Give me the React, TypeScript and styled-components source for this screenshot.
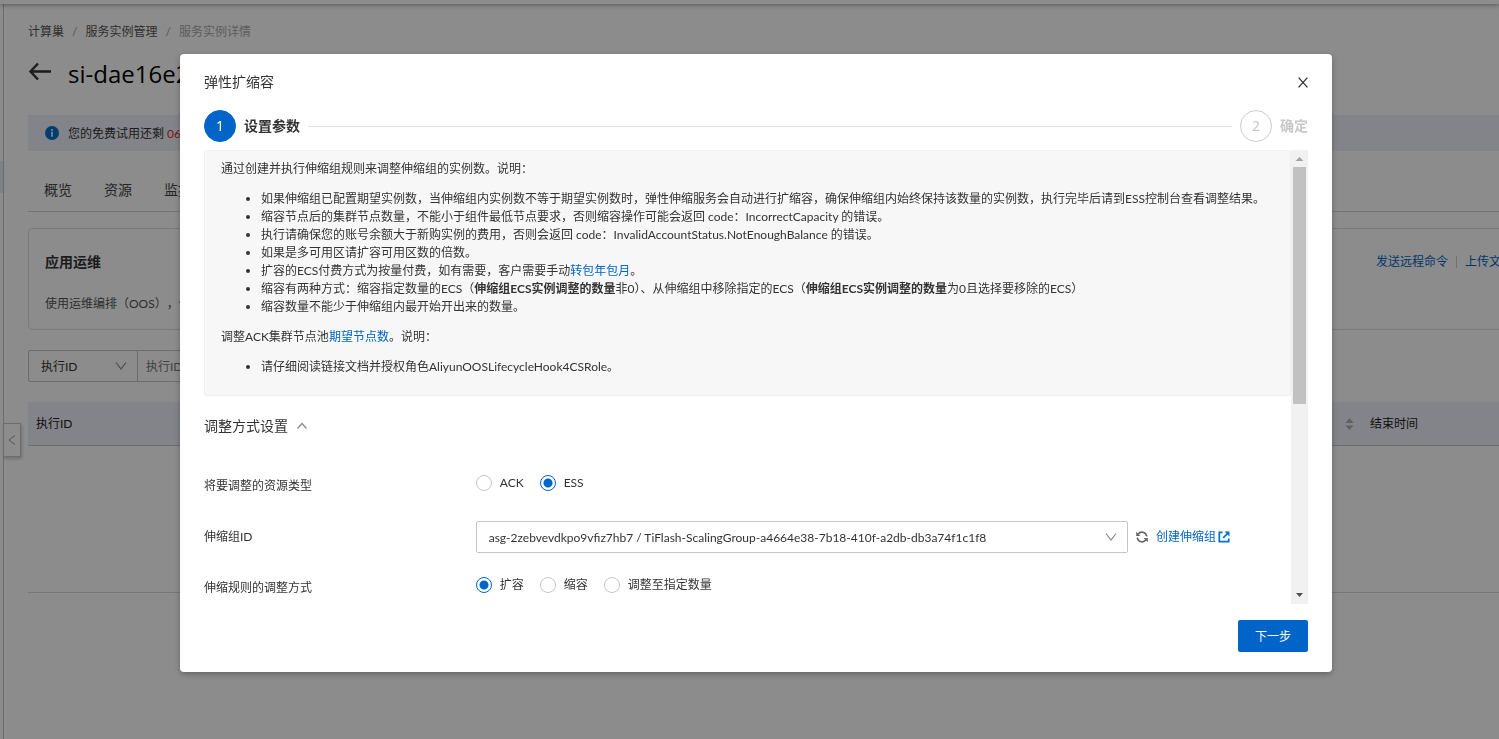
import React, { useState } from "react";
import styled, { createGlobalStyle } from "styled-components";

const GlobalStyle = createGlobalStyle`
  *, *::before, *::after { box-sizing: border-box; }
  body {
    margin: 0;
    background: #fff;
    color: #333;
    font: 12px/18px Lato, "Noto Sans CJK SC", sans-serif;
  }
  button, input, select { font: inherit; color: inherit; }
  a { color: #0064c8; text-decoration: none; }
`;

/* ---------- page behind the dialog ---------- */

const Page = styled.div`
  display: flex;
  flex-direction: column;
  height: 100vh;
  overflow: hidden;
`;

const TopBar = styled.header`
  flex: none;
  height: 4px;
  background: #fff;
  box-shadow: 0 1px 4px rgba(0, 0, 0, 0.4);
  z-index: 1;
`;

const Body = styled.div`
  display: flex;
  flex: 1;
  min-height: 0;
`;

const Sidebar = styled.aside`
  position: relative;
  flex: none;
  width: 4px;
  padding-top: 157px;
  border-right: 1px solid #c0c6cc;
`;

const SidebarActive = styled.div`
  height: 32px;
  background: #e6ebf5;
`;

const CollapseButton = styled.button`
  position: absolute;
  top: 419px;
  left: 3px;
  display: grid;
  place-items: center;
  width: 18px;
  height: 34px;
  padding: 0;
  border: 1px solid #c0c6cc;
  background: #fff;
  color: #999;
  box-shadow: 1px 2px 3px rgba(0, 0, 0, 0.2);
`;

const Main = styled.main`
  flex: none;
  width: calc(100% + 51px);
  padding: 19px 24px 0;
`;

const Breadcrumb = styled.nav`
  display: flex;
  height: 18px;
  a { color: #555; }
  a::after { content: "/"; margin: 0 8px; color: #999; }
  span { color: #aaa; }
`;

const TitleRow = styled.div`
  display: flex;
  align-items: center;
  gap: 16px;
  height: 36px;
  margin-top: 15px;
`;

const BackButton = styled.button`
  display: flex;
  padding: 0;
  border: 0;
  background: none;
  height: 24px;
`;

const PageTitle = styled.h1`
  margin: 0;
  font: 500 24px/36px "Open Sans", sans-serif;
  color: #000;
`;

const TrialNotice = styled.div`
  display: flex;
  align-items: center;
  gap: 9px;
  height: 36px;
  margin-top: 23px;
  padding: 1px 16px 0;
  background: #eff1f9;
  em { font-style: normal; color: #d93026; }
`;

const Tabs = styled.nav`
  display: flex;
  gap: 32px;
  height: 61px;
  padding: 29px 16px 0;
  border-bottom: 1px solid #d4d4d4;
  font-size: 14px;
  line-height: 20px;
  a { color: #444; }
`;

const OpsCard = styled.section`
  height: 102px;
  margin-top: 16px;
  padding: 23px 16px;
  border: 1px solid #dedede;
  border-radius: 4px;
  p { margin: 23px 0 0; color: #555; text-spacing-trim: space-all; }
`;

const CardHead = styled.div`
  display: flex;
  justify-content: space-between;
  align-items: center;
  h2 { margin: 0; font-size: 14px; line-height: 20px; font-weight: 700; }
`;

const CardLinks = styled.div`
  display: flex;
  a { line-height: 12px; }
  a + a { margin-left: 8px; padding-left: 8px; border-left: 1px solid #ccc; }
`;

const Filter = styled.div`
  display: flex;
  height: 32px;
  margin-top: 20px;
`;

const FilterKey = styled.div`
  width: 110px;
`;

const FilterInput = styled.input`
  width: 240px;
  margin-left: -1px;
  padding: 1px 8px 0;
  border: 1px solid #c0c6cc;
  &::placeholder { color: #777; opacity: 1; }
`;

const Table = styled.table`
  width: 100%;
  margin-top: 20px;
  border-collapse: collapse;
  table-layout: fixed;
  th {
    height: 43px;
    padding: 1px 8px 0;
    background: #eff1f9;
    border-bottom: 1px solid #c0c6d4;
    text-align: left;
    font-weight: 400;
    color: #222;
  }
  td { height: 147px; border-bottom: 1px solid #d8d8d8; }
`;

const SortHead = styled.th`
  button { display: block; margin-left: auto; padding: 0; border: 0; background: none; height: 14px; }
`;

const EndHead = styled.th`
  width: 168px;
`;

/* ---------- shared select ---------- */

const SelectBox = styled.div`
  position: relative;
  height: 32px;
  svg { position: absolute; top: 10px; right: 11px; pointer-events: none; }
`;

const Select = styled.select`
  width: 100%;
  height: 32px;
  padding: 1px 32px 0 12px;
  border: 1px solid #c0c6cc;
  border-radius: 2px;
  background: transparent;
  appearance: none;
`;

/* ---------- dialog ---------- */

const Mask = styled.div`
  position: fixed;
  inset: 0;
  z-index: 10;
  padding: 54px 167px 67px 180px;
  background: rgba(0, 0, 0, 0.45);
`;

const Dialog = styled.section`
  display: flex;
  flex-direction: column;
  height: 100%;
  padding: 16px 24px 20px;
  border-radius: 4px;
  background: #fff;
  box-shadow: 0 2px 6px rgba(0, 0, 0, 0.3);
`;

const DialogHead = styled.header`
  display: flex;
  justify-content: space-between;
  align-items: center;
  height: 24px;
  h2 { margin: 0; font-size: 14px; line-height: 24px; font-weight: 400; }
`;

const CloseButton = styled.button`
  display: flex;
  padding: 0;
  border: 0;
  background: none;
`;

const Steps = styled.ol`
  display: flex;
  align-items: center;
  gap: 8px;
  height: 32px;
  margin: 16px 0 8px;
  padding: 0;
  list-style: none;
`;

const Step = styled.li<{ $active?: boolean }>`
  display: flex;
  align-items: center;
  gap: 8px;
  font-size: 14px;
  line-height: 20px;
  font-weight: 700;
  color: ${(p) => (p.$active ? "#333" : "#c8c8c8")};
  span {
    display: grid;
    place-items: center;
    width: 32px;
    height: 32px;
    border: 1px solid ${(p) => (p.$active ? "#0064c8" : "#ccc")};
    border-radius: 50%;
    background: ${(p) => (p.$active ? "#0064c8" : "#fff")};
    color: ${(p) => (p.$active ? "#fff" : "#c8c8c8")};
    font-family: "Noto Sans", sans-serif;
    font-weight: 400;
  }
`;

const StepLine = styled.li`
  flex: 1;
  height: 1px;
  background: #e3e3e3;
`;

const ScrollArea = styled.div`
  display: flex;
  flex: 1;
  min-height: 0;
`;

const ScrollContent = styled.div`
  flex: 1;
  min-width: 0;
  overflow: hidden;
`;

const ScrollBar = styled.div`
  display: flex;
  flex-direction: column;
  justify-content: space-between;
  align-items: center;
  width: 17px;
  background: #f1f1f1;
  svg { flex: none; }
`;

const Track = styled.div`
  flex: 1;
  width: 13px;
`;

const Thumb = styled.div`
  height: 237px;
  background: #c1c1c1;
`;

const Notes = styled.div`
  padding: 9px 16px 7px;
  border: 1px solid #eef0f6;
  border-radius: 2px;
  background: #f7f7f7;
  p { margin: 0; }
  ul { margin: 12px 0; padding-left: 40px; }
`;

const SectionToggle = styled.button`
  display: flex;
  align-items: center;
  gap: 8px;
  margin: 20px 0 34px;
  padding: 0;
  border: 0;
  background: none;
  font-size: 14px;
  line-height: 20px;
`;

const FormRow = styled.div`
  display: grid;
  grid-template-columns: 25% 60% 1fr;
  min-height: 32px;
  margin: 0 0 19px;
`;

const FormLabel = styled.label`
  line-height: 32px;
`;

const RadioList = styled.div`
  display: flex;
  gap: 16px;
  height: 25px;
`;

const RadioLabel = styled.label`
  display: flex;
  align-items: center;
  gap: 8px;
`;

const Radio = styled.input`
  appearance: none;
  width: 16px;
  height: 16px;
  margin: 0;
  border: 1px solid #c0c6cc;
  border-radius: 50%;
  background: #fff;
  &:checked {
    border-color: #0064c8;
    background: radial-gradient(circle, #0064c8 4px, #fff 5px);
  }
`;

const RowActions = styled.div`
  display: flex;
  align-items: center;
  gap: 8px;
  padding-left: 8px;
  a { display: flex; align-items: center; white-space: nowrap; }
  a svg { margin-left: 2px; }
`;

const IconButton = styled.button`
  display: flex;
  padding: 0;
  border: 0;
  background: none;
`;

const DialogFoot = styled.footer`
  display: flex;
  justify-content: flex-end;
  margin-top: 16px;
`;

const PrimaryButton = styled.button`
  width: 70px;
  height: 32px;
  padding: 1px 0 0;
  border: 0;
  border-radius: 2px;
  background: #0064c8;
  color: #fff;
`;

/* ---------- icons ---------- */

const ChevronDown = () => (
  <svg width="12" height="12" viewBox="0 0 12 12" fill="none" stroke="#888" strokeWidth="1.2">
    <path d="M1 2.5 6 9 11 2.5" />
  </svg>
);

const ChevronUp = () => (
  <svg width="12" height="12" viewBox="0 0 12 12" fill="none" stroke="#888" strokeWidth="1.2">
    <path d="M1.500 8.500 6 3.500 10.500 8.500" />
  </svg>
);

const ChevronLeft = () => (
  <svg width="10" height="12" viewBox="0 0 10 12" fill="none" stroke="#999" strokeWidth="1">
    <path d="M8 1.5 2 6 8 10.5" />
  </svg>
);

const BackArrow = () => (
  <svg width="24" height="18" viewBox="0 0 24 18" fill="none" stroke="#333" strokeWidth="2.4">
    <path d="M10 1.500 2.500 9.500 10 17.500M2.500 9.500H23" />
  </svg>
);

const InfoIcon = () => (
  <svg width="15" height="15" viewBox="0 0 15 15">
    <circle cx="8" cy="7" r="7" fill="#0070cc" />
    <path d="M8 3v1.800M8 5.800v5" stroke="#fff" strokeWidth="1.6" />
  </svg>
);

const CloseIcon = () => (
  <svg width="10" height="11" viewBox="0 0 10 11" fill="none" stroke="#333" strokeWidth="1.3">
    <path d="M.6.6 9.4 10.4M9.4.6.6 10.4" />
  </svg>
);

const SortIcon = () => (
  <svg width="9" height="14" viewBox="0 0 9 14" fill="#b0b0b0">
    <path d="M4.5 1 8.5 6h-8zM4.5 13 .5 8.500h8z" />
  </svg>
);

const RefreshIcon = () => (
  <svg width="12" height="12" viewBox="0 0 12 12" fill="none" stroke="#666" strokeWidth="1.6">
    <path d="M2 3.200C4.500-.2 9.800.600 10.800 5.400M10 8.800C7.500 12.200 2.200 11.400 1.200 6.600" />
    <path d="M.2.8v4.200h4.200zM11.800 11.200V7H7.600z" fill="#666" stroke="none" />
  </svg>
);

const ExternalIcon = () => (
  <svg width="12" height="12" viewBox="0 0 12 12" fill="none" stroke="#0070cc" strokeWidth="1.7">
    <path d="M4.500 1.300H1.300v9.400h9.400V7.500M5.200 6.800 10 2" />
    <path d="M6.500.500h5v5z" fill="#0070cc" stroke="none" />
  </svg>
);

const ScrollArrow = ({ up }: { up?: boolean }) => (
  <svg width="17" height="17" viewBox="0 0 17 17" fill={up ? "#a3a3a3" : "#505050"}>
    <path d={up ? "M8.500 7 12.500 11h-8z" : "M5 6h7l-3.500 4z"} />
  </svg>
);

/* ---------- data ---------- */

const scalingNotes: React.ReactNode[] = [
  "如果伸缩组已配置期望实例数，当伸缩组内实例数不等于期望实例数时，弹性伸缩服务会自动进行扩缩容，确保伸缩组内始终保持该数量的实例数，执行完毕后请到ESS控制台查看调整结果。",
  "缩容节点后的集群节点数量，不能小于组件最低节点要求，否则缩容操作可能会返回 code：IncorrectCapacity 的错误。",
  "执行请确保您的账号余额大于新购实例的费用，否则会返回 code：InvalidAccountStatus.NotEnoughBalance 的错误。",
  "如果是多可用区请扩容可用区数的倍数。",
  <>扩容的ECS付费方式为按量付费，如有需要，客户需要手动<a href="#renew">转包年包月</a>。</>,
  <>缩容有两种方式：缩容指定数量的ECS（<b>伸缩组ECS实例调整的数量</b>非0）、从伸缩组中移除指定的ECS（<b>伸缩组ECS实例调整的数量</b>为0且选择要移除的ECS）</>,
  "缩容数量不能少于伸缩组内最开始开出来的数量。",
];

function RadioGroup(props: { name: string; label: string; options: string[]; initial: string }) {
  const [value, setValue] = useState(props.initial);
  return (
    <FormRow role="radiogroup" aria-labelledby={props.name}>
      <FormLabel as="span" id={props.name}>{props.label}</FormLabel>
      <RadioList>
        {props.options.map((o) => (
          <RadioLabel key={o}>
            <Radio type="radio" name={props.name} checked={value === o} onChange={() => setValue(o)} />
            {o}
          </RadioLabel>
        ))}
      </RadioList>
    </FormRow>
  );
}

function InstancePage() {
  return (
    <Page>
      <TopBar />
      <Body>
        <Sidebar>
          <SidebarActive />
          <CollapseButton aria-label="收起"><ChevronLeft /></CollapseButton>
        </Sidebar>
        <Main>
          <Breadcrumb>
            <a href="#home">计算巢</a>
            <a href="#instances">服务实例管理</a>
            <span>服务实例详情</span>
          </Breadcrumb>
          <TitleRow>
            <BackButton aria-label="返回"><BackArrow /></BackButton>
            <PageTitle>si-dae16e2</PageTitle>
          </TitleRow>
          <TrialNotice>
            <InfoIcon />
            <span>您的免费试用还剩 <em>06</em></span>
          </TrialNotice>
          <Tabs>
            <a href="#overview">概览</a>
            <a href="#resources">资源</a>
            <a href="#monitor">监控</a>
          </Tabs>
          <OpsCard>
            <CardHead>
              <h2>应用运维</h2>
              <CardLinks>
                <a href="#command">发送远程命令</a>
                <a href="#upload">上传文件</a>
              </CardLinks>
            </CardHead>
            <p>使用运维编排（OOS），使</p>
          </OpsCard>
          <Filter>
            <FilterKey>
              <SelectBox>
                <Select aria-label="筛选项"><option>执行ID</option></Select>
                <ChevronDown />
              </SelectBox>
            </FilterKey>
            <FilterInput aria-label="执行ID" placeholder="执行ID" />
          </Filter>
          <Table>
            <thead>
              <tr>
                <th>执行ID</th>
                <SortHead><button aria-label="排序"><SortIcon /></button></SortHead>
                <EndHead>结束时间</EndHead>
              </tr>
            </thead>
            <tbody>
              <tr><td colSpan={3} /></tr>
            </tbody>
          </Table>
        </Main>
      </Body>
    </Page>
  );
}

function ScalingDialog() {
  return (
    <Mask>
      <Dialog role="dialog" aria-modal="true" aria-labelledby="dialog-title">
        <DialogHead>
          <h2 id="dialog-title">弹性扩缩容</h2>
          <CloseButton aria-label="关闭"><CloseIcon /></CloseButton>
        </DialogHead>
        <Steps>
          <Step $active><span>1</span>设置参数</Step>
          <StepLine aria-hidden="true" />
          <Step><span>2</span>确定</Step>
        </Steps>
        <ScrollArea>
          <ScrollContent>
            <Notes>
              <p>通过创建并执行伸缩组规则来调整伸缩组的实例数。说明：</p>
              <ul>{scalingNotes.map((note, i) => <li key={i}>{note}</li>)}</ul>
              <p>调整ACK集群节点池<a href="#nodes">期望节点数</a>。说明：</p>
              <ul><li>请仔细阅读链接文档并授权角色AliyunOOSLifecycleHook4CSRole。</li></ul>
            </Notes>
            <SectionToggle aria-expanded="true">调整方式设置 <ChevronUp /></SectionToggle>
            <RadioGroup name="resource" label="将要调整的资源类型" options={["ACK", "ESS"]} initial="ESS" />
            <FormRow>
              <FormLabel htmlFor="group">伸缩组ID</FormLabel>
              <SelectBox>
                <Select id="group">
                  <option>asg-2zebvevdkpo9vfiz7hb7 / TiFlash-ScalingGroup-a4664e38-7b18-410f-a2db-db3a74f1c1f8</option>
                </Select>
                <ChevronDown />
              </SelectBox>
              <RowActions>
                <IconButton aria-label="刷新"><RefreshIcon /></IconButton>
                <a href="#create">创建伸缩组<ExternalIcon /></a>
              </RowActions>
            </FormRow>
            <RadioGroup name="adjust" label="伸缩规则的调整方式" options={["扩容", "缩容", "调整至指定数量"]} initial="扩容" />
          </ScrollContent>
          <ScrollBar aria-hidden="true">
            <ScrollArrow up />
            <Track><Thumb /></Track>
            <ScrollArrow />
          </ScrollBar>
        </ScrollArea>
        <DialogFoot>
          <PrimaryButton>下一步</PrimaryButton>
        </DialogFoot>
      </Dialog>
    </Mask>
  );
}

export default function App() {
  return (
    <>
      <GlobalStyle />
      <InstancePage />
      <ScalingDialog />
    </>
  );
}
